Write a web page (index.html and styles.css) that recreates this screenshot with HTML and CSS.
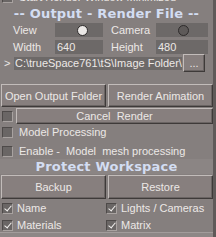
FILE: index.html
```html
<!DOCTYPE html>
<html lang="en">
<head>
  <meta charset="UTF-8">
  <title>Output - Render File</title>
  <link rel="stylesheet" href="styles.css">
</head>
<body>
  <div class="panel">
    <div class="row cut">
      <span class="chk"></span>
      <span class="lbl">Start Render Window Minimized</span>
    </div>

    <div class="title">-- Output - Render File --</div>

    <div class="grid2">
      <span class="lbl">View</span>
      <span class="field"><span class="dot on"></span></span>
      <span class="lbl">Camera</span>
      <span class="field"><span class="dot"></span></span>
      <span class="lbl">Width</span>
      <span class="field">640</span>
      <span class="lbl">Height</span>
      <span class="field">480</span>
    </div>

    <div class="row path">
      <span class="arrow">&gt;</span>
      <span class="field pathtext">C:\trueSpace761\tS\Image Folder\</span>
      <button class="btn dots">...</button>
    </div>

    <div class="pair big">
      <button class="btn">Open Output Folder</button>
      <button class="btn">Render Animation</button>
    </div>

    <div class="row cancel">
      <span class="chk"></span>
      <button class="btn wide">Cancel &nbsp;Render</button>
    </div>

    <div class="row opt first">
      <span class="chk"></span>
      <span class="lbl">Model Processing</span>
    </div>
    <div class="row opt">
      <span class="chk"></span>
      <span class="lbl">Enable - &nbsp;Model &nbsp;mesh processing</span>
    </div>

    <div class="title sub">Protect Workspace</div>

    <div class="pair backup">
      <button class="btn">Backup</button>
      <button class="btn">Restore</button>
    </div>

    <div class="checks">
      <div class="row opt"><span class="chk checked"></span><span class="lbl">Name</span></div>
      <div class="row opt"><span class="chk checked"></span><span class="lbl">Lights / Cameras</span></div>
      <div class="row opt"><span class="chk checked"></span><span class="lbl">Materials</span></div>
      <div class="row opt"><span class="chk checked"></span><span class="lbl">Matrix</span></div>
    </div>
    <div class="foot"></div>
  </div>
</body>
</html>
```

FILE: styles.css
```css
body { margin: 0; background: #857f7e; font-family: "Liberation Sans", Arial, sans-serif; font-size: 11px; color: #ece8e6; overflow: hidden; }
.panel { width: 213px; height: 237px; border-right: 3px solid #5f5a59; background: #857f7e; overflow: hidden; }
.row { display: flex; align-items: center; }
.lbl { white-space: nowrap; }

.chk { width: 9px; height: 9px; flex: none; background: #6a6665; border: 1px solid;
  border-color: #4e4a49 #a8a2a0 #a8a2a0 #4e4a49; position: relative; margin-left: 2px; }
.chk.checked::after { content: ""; position: absolute; left: 3px; top: 0px; width: 3px; height: 6px;
  border: solid #f4f2f0; border-width: 0 1px 1px 0; transform: rotate(40deg); }

.cut { height: 14px; margin-top: -10px; }
.cut .lbl { margin-left: 6px; }

.title { text-align: center; font-family: "DejaVu Sans", Verdana, sans-serif; font-weight: bold;
  font-size: 13px; letter-spacing: 0.2px; color: #d3ddf2; height: 16px; line-height: 16px; margin-top: 2px; }

.grid2 { display: grid; grid-template-columns: 42px 48px 53px 52px; grid-auto-rows: 14px; row-gap: 3px;
  padding-left: 13px; margin-top: 1px; }
.grid2 .lbl:nth-child(3), .grid2 .lbl:nth-child(7) { padding-left: 8px; }
.field { background: #6d6968; height: 14px; line-height: 14px; display: flex; align-items: center;
  padding-left: 2px; overflow: hidden; white-space: nowrap; }
.grid2 .lbl { line-height: 14px; }
.dot { width: 9px; height: 9px; border-radius: 50%; background: #5e5a59; border: 1px solid #2e2b2b; margin-left: 20px; }
.dot.on { background: #ebe8e6; }

.path { height: 18px; }
.arrow { width: 14px; flex: none; padding-left: 4px; box-sizing: border-box; }
.pathtext { width: 168px; flex: none; height: 13px; padding-left: 1px; box-sizing: border-box; }
.btn { font-family: "Liberation Sans", Arial, sans-serif; font-size: 11px; color: #ece8e6; background: #877f7e;
  border: 1px solid; border-color: #c2bcba #3e3a39 #3e3a39 #c2bcba; box-shadow: inset -1px -1px 0 #6a6463;
  padding: 0; margin: 0; cursor: pointer; white-space: nowrap; }
.dots { width: 22px; flex: none; height: 18px; margin-left: 1px; line-height: 10px; }

.pair { display: flex; gap: 2px; padding-left: 1px; }
.pair .btn { flex: 1; }
.big { margin-top: 12px; height: 23px; }
.cancel { height: 16px; margin-top: 1px; }
.wide { flex: 1; height: 16px; margin-left: 3px; line-height: 12px; }

.opt { height: 12px; margin-top: 7px; }
.opt.first { margin-top: 2px; }
.opt .lbl { margin-left: 6px; }

.sub { background: #8b8584; margin-top: 2px; height: 15px; line-height: 15px; }
.backup { height: 24px; margin-top: 1px; }

.checks { display: grid; grid-template-columns: 104px 1fr; row-gap: 5px; margin-top: 3px; }
.checks .opt { margin-top: 0; height: 12px; }
.checks .lbl { margin-left: 4px; }
.foot { height: 8px; margin-top: 1px; border-top: 1px solid #a29c9b; background: #8d8786; }
```
